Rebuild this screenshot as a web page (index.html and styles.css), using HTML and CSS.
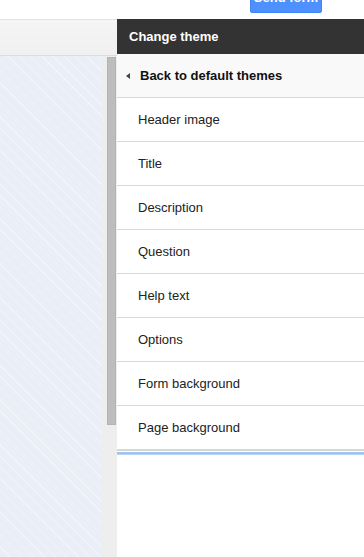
FILE: index.html
```html
<!DOCTYPE html>
<html lang="en">
<head>
    <meta charset="UTF-8">
    <meta name="viewport" content="width=device-width, initial-scale=1.0">
    <title>Change theme</title>
    <link rel="stylesheet" href="styles.css">
</head>
<body>
    <div class="topbar">
        <button class="send-btn">Send form</button>
    </div>

    <div class="main">
        <div class="editor">
            <div class="toolbar"></div>
            <div class="canvas">
                <div class="stripes"></div>
                <div class="gutter">
                    <div class="thumb"></div>
                </div>
            </div>
        </div>

        <div class="theme-panel">
            <div class="panel-header">Change theme</div>
            <div class="panel-row back-row">
                <span class="back-arrow"></span>
                <span>Back to default themes</span>
            </div>
            <div class="panel-row">Header image</div>
            <div class="panel-row">Title</div>
            <div class="panel-row">Description</div>
            <div class="panel-row">Question</div>
            <div class="panel-row">Help text</div>
            <div class="panel-row">Options</div>
            <div class="panel-row">Form background</div>
            <div class="panel-row">Page background</div>
            <div class="panel-divider"></div>
        </div>
    </div>
</body>
</html>
```

FILE: styles.css
```css
* {
    margin: 0;
    padding: 0;
    box-sizing: border-box;
}

body {
    font-family: "Liberation Sans", Arial, sans-serif;
    width: 364px;
    height: 557px;
    overflow: hidden;
    background: white;
    color: #222;
}

.topbar {
    height: 19px;
    overflow: hidden;
    display: flex;
    justify-content: flex-end;
    align-items: flex-end;
    padding-right: 42px;
}

.send-btn {
    width: 72px;
    height: 28px;
    margin-bottom: 6px;
    background: #4d90fe;
    border: 1px solid #3f84f5;
    border-radius: 2px;
    color: white;
    font-family: inherit;
    font-size: 13px;
    font-weight: 700;
    padding-bottom: 4px;
}

.main {
    display: flex;
    height: 538px;
}

.editor {
    width: 117px;
    display: flex;
    flex-direction: column;
}

.toolbar {
    height: 37px;
    background: linear-gradient(#f5f5f5, #f0f0f0);
    border-top: 1px solid #e3e3e3;
    border-bottom: 1px solid #dcdcdc;
}

.canvas {
    flex: 1;
    display: flex;
}

.stripes {
    width: 102px;
    background-color: #e9eef7;
    background-image: repeating-linear-gradient(45deg, #e9eef7 0, #e9eef7 7px, #f1f4fa 7px, #f1f4fa 8px);
}

.gutter {
    flex: 1;
    background: #efeeee;
    padding: 1px 1px 0 5px;
}

.thumb {
    height: 368px;
    background: #bdbdbd;
    border: 1px solid #b3b3b3;
}

.theme-panel {
    flex: 1;
    background: white;
}

.panel-header {
    height: 35px;
    background: #333;
    color: white;
    font-size: 13px;
    font-weight: 700;
    padding-left: 12px;
    padding-bottom: 1px;
    display: flex;
    align-items: center;
}

.panel-row {
    height: 44px;
    border-bottom: 1px solid #d8d8d8;
    display: flex;
    align-items: center;
    padding-left: 21px;
    font-size: 13px;
    color: #222;
}

.back-row {
    background: #f9f9f9;
    padding-left: 9px;
    font-weight: 700;
    color: #111;
}

.back-arrow {
    width: 0;
    height: 0;
    border-top: 3px solid transparent;
    border-bottom: 3px solid transparent;
    border-right: 4px solid #444;
    margin-right: 10px;
    margin-top: 1px;
}

.panel-divider {
    height: 5px;
    border-top: 1px solid #d4d4d4;
    background: linear-gradient(#fff 0, #fff 1px, #b8d4f4 1px, #8cb9ec 2px, #c3dcf6 4px, #fff 4px);
}
```
